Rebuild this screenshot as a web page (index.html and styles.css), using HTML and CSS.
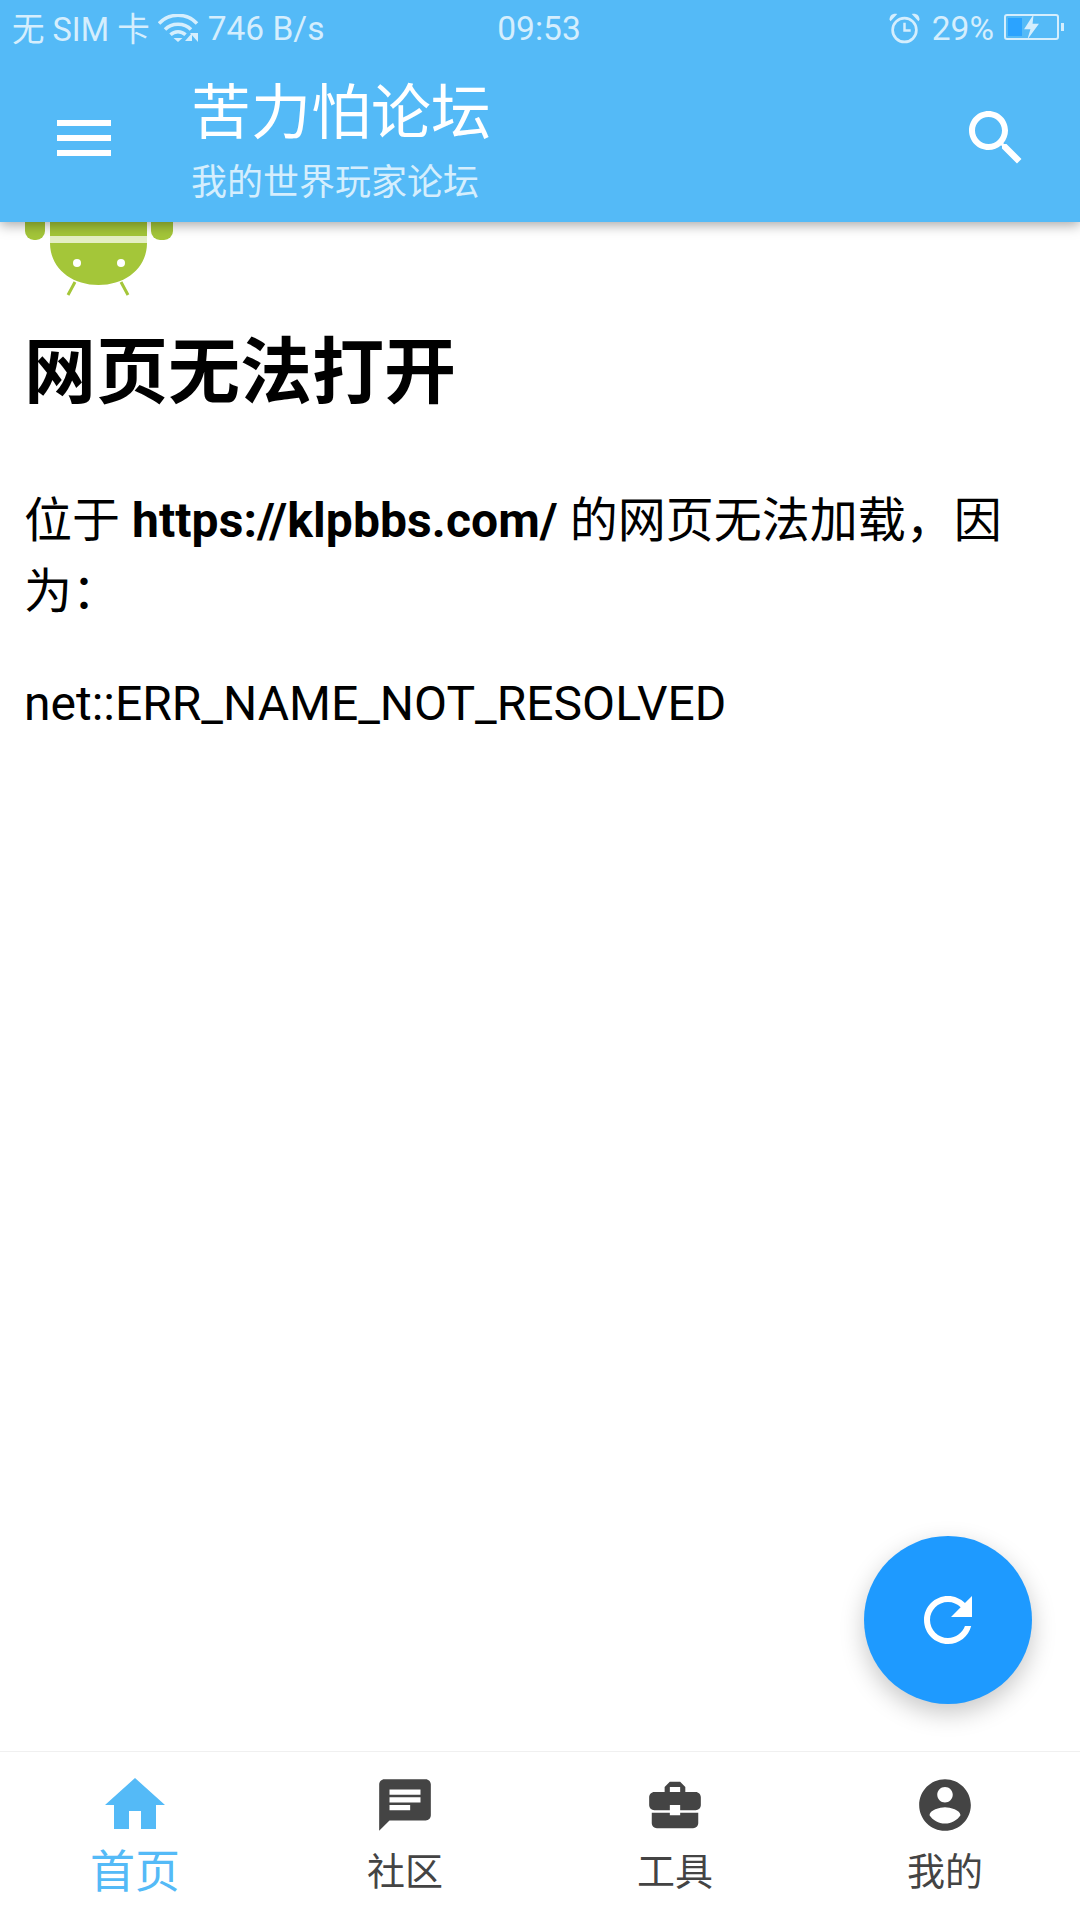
FILE: index.html
```html
<!DOCTYPE html>
<html lang="zh-CN">
<head>
    <meta charset="UTF-8">
    <meta name="viewport" content="width=device-width, initial-scale=1.0">
    <title>苦力怕论坛</title>
    <link rel="stylesheet" href="styles.css">
</head>
<body>
    <div class="app">
        <header class="header">
            <div class="status-bar">
                <div class="status-left">
                    <span class="sim-text">无 SIM 卡</span>
                    <svg class="wifi-icon" viewBox="0 0 44 28">
                        <path d="M1 9.500C11 -1.500 29 -1.500 39 9.500" fill="none" stroke="currentColor" stroke-width="3.400"/>
                        <path d="M7 15.500C13.500 8.500 26.500 8.500 33 15.500" fill="none" stroke="currentColor" stroke-width="3.400"/>
                        <path d="M12.500 20.800C16.500 16.800 23.500 16.800 27.500 20.800" fill="none" stroke="currentColor" stroke-width="3.400"/>
                        <path d="M15.500 24H24.500L20 28z" fill="currentColor"/>
                        <path d="M34 19V27H27z" fill="currentColor"/>
                        <path d="M36 18V27H44z" fill="currentColor" transform="rotate(180 38 23)"/>
                    </svg>
                    <span>746 B/s</span>
                </div>
                <div class="status-time">09:53</div>
                <div class="status-right">
                    <svg class="alarm-icon" viewBox="0 0 30 30">
                        <circle cx="15" cy="16.500" r="11.500" fill="none" stroke="currentColor" stroke-width="2.600"/>
                        <path d="M15 9.500V17H21" fill="none" stroke="currentColor" stroke-width="2.400"/>
                        <path d="M0.500 6.500C0.500 2 4 0 8 1L1.500 8z" fill="currentColor"/>
                        <path d="M29.500 6.500C29.500 2 26 0 22 1L28.500 8z" fill="currentColor"/>
                    </svg>
                    <span class="battery-text">29%</span>
                    <div class="battery">
                        <div class="battery-level"></div>
                        <svg class="bolt-icon" viewBox="0 0 16 24">
                            <path d="M10 0L1 14H7L4 24L15 9H9z" fill="currentColor"/>
                        </svg>
                    </div>
                    <div class="battery-nub"></div>
                </div>
            </div>
            <div class="toolbar">
                <svg class="toolbar-icon" viewBox="0 0 24 24">
                    <path d="M3 18h18v-2H3v2zm0-5h18v-2H3v2zm0-7v2h18V6H3z" fill="currentColor"/>
                </svg>
                <div class="toolbar-title">
                    <div class="title">苦力怕论坛</div>
                    <div class="subtitle">我的世界玩家论坛</div>
                </div>
                <svg class="toolbar-icon" viewBox="0 0 24 24">
                    <path d="M15.500 14h-.79l-.28-.27C15.410 12.590 16 11.110 16 9.500 16 5.910 13.090 3 9.500 3S3 5.910 3 9.500 5.910 16 9.500 16c1.610 0 3.090-.59 4.230-1.570l.27.28v.79l5 4.990L20.490 19l-4.990-5zm-6 0C7.010 14 5 11.990 5 9.500S7.010 5 9.500 5 14 7.010 14 9.500 11.990 14 9.500 14z" fill="currentColor"/>
                </svg>
            </div>
        </header>

        <main class="content">
            <div class="error-image">
                <svg class="android" viewBox="24 222 150 76">
                    <rect x="25" y="210" width="20" height="30" rx="9" fill="#a4c639"/>
                    <rect x="151" y="210" width="22" height="30" rx="9" fill="#a4c639"/>
                    <rect x="50" y="236" width="97" height="7" fill="#e4efc4"/>
                    <path d="M50 222H147V236H50zM50 243H147C147 268 126 285 98.500 285C71 285 50 268 50 243z" fill="#a4c639"/>
                    <circle cx="77" cy="263" r="4" fill="#fff"/>
                    <circle cx="121" cy="263" r="4" fill="#fff"/>
                    <path d="M75 282L68 295M121 282L128 295" stroke="#a4c639" stroke-width="3" fill="none"/>
                </svg>
            </div>
            <h1>网页无法打开</h1>
            <p>位于 <strong>https://klpbbs.com/</strong> 的网页无法加载，因为：</p>
            <p>net::ERR_NAME_NOT_RESOLVED</p>

            <button class="fab">
                <svg class="fab-icon" viewBox="0 0 24 24">
                    <path d="M17.650 6.350C16.200 4.900 14.210 4 12 4c-4.420 0-7.990 3.580-7.990 8s3.570 8 7.990 8c3.730 0 6.840-2.550 7.730-6h-2.080c-.82 2.330-3.040 4-5.650 4-3.310 0-6-2.690-6-6s2.690-6 6-6c1.660 0 3.140.69 4.220 1.780L13 11h7V4l-2.350 2.350z" fill="currentColor"/>
                </svg>
            </button>
        </main>

        <nav class="tabbar">
            <div class="tab active">
                <svg class="tab-icon home-icon" viewBox="0 0 24 24">
                    <path d="M10 20v-6h4v6h5v-8h3L12 3 2 12h3v8z" fill="currentColor"/>
                </svg>
                <span class="tab-label">首页</span>
            </div>
            <div class="tab">
                <svg class="tab-icon" viewBox="0 0 24 24">
                    <path d="M20 2H4c-1.100 0-1.990.9-1.990 2L2 22l4-4h14c1.100 0 2-.9 2-2V4c0-1.100-.9-2-2-2zM6 9h12v2H6V9zm8 5H6v-2h8v2zm4-6H6V6h12v2z" fill="currentColor"/>
                </svg>
                <span class="tab-label">社区</span>
            </div>
            <div class="tab">
                <svg class="tab-icon" viewBox="0 0 24 24">
                    <path d="M10 16v-1H3.010L3 19c0 1.110.89 2 2 2h14c1.110 0 2-.89 2-2v-4h-7v1h-4zm10-9h-4.010V5l-2-2h-4l-2 2v2H4c-1.100 0-2 .9-2 2v3c0 1.110.89 2 2 2h6v-2h4v2h6c1.100 0 2-.89 2-2V9c0-1.100-.9-2-2-2zm-6 0h-4V5h4v2z" fill="currentColor"/>
                </svg>
                <span class="tab-label">工具</span>
            </div>
            <div class="tab">
                <svg class="tab-icon" viewBox="0 0 24 24">
                    <path d="M12 2C6.480 2 2 6.480 2 12s4.480 10 10 10 10-4.480 10-10S17.520 2 12 2zm0 3c1.660 0 3 1.340 3 3s-1.340 3-3 3-3-1.340-3-3 1.340-3 3-3zm0 14.200c-2.500 0-4.710-1.280-6-3.220.03-1.990 4-3.080 6-3.080 1.990 0 5.970 1.090 6 3.080-1.290 1.940-3.500 3.220-6 3.220z" fill="currentColor"/>
                </svg>
                <span class="tab-label">我的</span>
            </div>
        </nav>
    </div>
</body>
</html>
```

FILE: styles.css
```css
* {
    box-sizing: border-box;
}
body {
    margin: 0;
    font-family: Roboto, "Noto Sans CJK SC", sans-serif;
    background-color: white;
    color: black;
}
.app {
    display: flex;
    flex-direction: column;
    width: 1080px;
    height: 1920px;
    overflow: hidden;
}

/* header */
.header {
    position: relative;
    z-index: 2;
    height: 222px;
    background-color: #54baf7;
    box-shadow: 0 3px 12px rgba(0,0,0,0.35);
}
.status-bar {
    display: grid;
    grid-template-columns: 1fr auto 1fr;
    align-items: center;
    height: 56px;
    padding: 0 16px 0 12px;
    font-size: 33.5px;
    color: #d5eefd;
}
.status-left, .status-right {
    display: flex;
    align-items: center;
}
.status-right {
    justify-content: flex-end;
}
.sim-text {
    margin-top: -3px;
    font-size: 32.5px;
}
.status-time {
    margin-left: 2px;
}
.wifi-icon {
    width: 44px;
    height: 28px;
    margin: 0 6px 0 8px;
}
.alarm-icon {
    width: 31px;
    height: 31px;
    margin-right: 12px;
}
.battery-text {
    margin-right: 10px;
}
.battery {
    position: relative;
    width: 55px;
    height: 26px;
    margin-top: -2px;
    padding: 2px;
    border: 2px solid #d5eefd;
    border-radius: 3px;
}
.battery-level {
    width: 14px;
    height: 100%;
    background-color: #2ba3ff;
}
.bolt-icon {
    position: absolute;
    left: 17px;
    top: -2px;
    width: 17px;
    height: 26px;
}
.battery-nub {
    width: 3px;
    height: 8px;
    margin-left: 2px;
    margin-top: -2px;
    background-color: #d5eefd;
}
.toolbar {
    display: flex;
    align-items: center;
    height: 166px;
    padding: 0 48px 2px 48px;
    color: white;
}
.toolbar-icon {
    flex: none;
    width: 72px;
    height: 72px;
}
.toolbar-title {
    flex: 1;
    margin-left: 71px;
    padding-top: 10px;
}
.title {
    font-size: 60px;
    line-height: 72px;
}
.subtitle {
    margin-top: 8px;
    font-size: 36px;
    line-height: 50px;
    color: #d5eefd;
}

/* webview */
.content {
    position: relative;
    flex: 1;
    padding: 0 24px;
}
.error-image {
    height: 76px;
    overflow: hidden;
}
.android {
    display: block;
    width: 150px;
    height: 76px;
    filter: blur(0.7px);
}
h1 {
    margin: 39px 0 76px;
    font-size: 72px;
    line-height: 72px;
    font-weight: bold;
}
p {
    margin: 41px 0 0;
    font-size: 48px;
    line-height: 71px;
}
strong {
    letter-spacing: 0.1px;
}
.fab {
    position: absolute;
    right: 48px;
    bottom: 47px;
    display: flex;
    align-items: center;
    justify-content: center;
    width: 168px;
    height: 168px;
    padding: 0;
    border: none;
    border-radius: 50%;
    background-color: #1e9aff;
    color: white;
    box-shadow: 0 9px 24px rgba(0,0,0,0.22);
}
.fab-icon {
    width: 72px;
    height: 72px;
}

/* bottom tabs */
.tabbar {
    display: grid;
    grid-template-columns: repeat(4, 1fr);
    height: 169px;
    border-top: 1px solid #f0f0f0;
    background-color: white;
}
.tab {
    display: flex;
    flex-direction: column;
    align-items: center;
    color: #444;
}
.tab-icon {
    width: 62px;
    height: 62px;
    margin-top: 22px;
}
.tab-label {
    margin-top: 11px;
    font-size: 38px;
    line-height: 50px;
}
.tab.active {
    color: #54baf7;
}
.home-icon {
    width: 72px;
    height: 72px;
    margin-top: 17px;
}
.tab.active .tab-label {
    margin-top: 7px;
    font-size: 45px;
}
```
